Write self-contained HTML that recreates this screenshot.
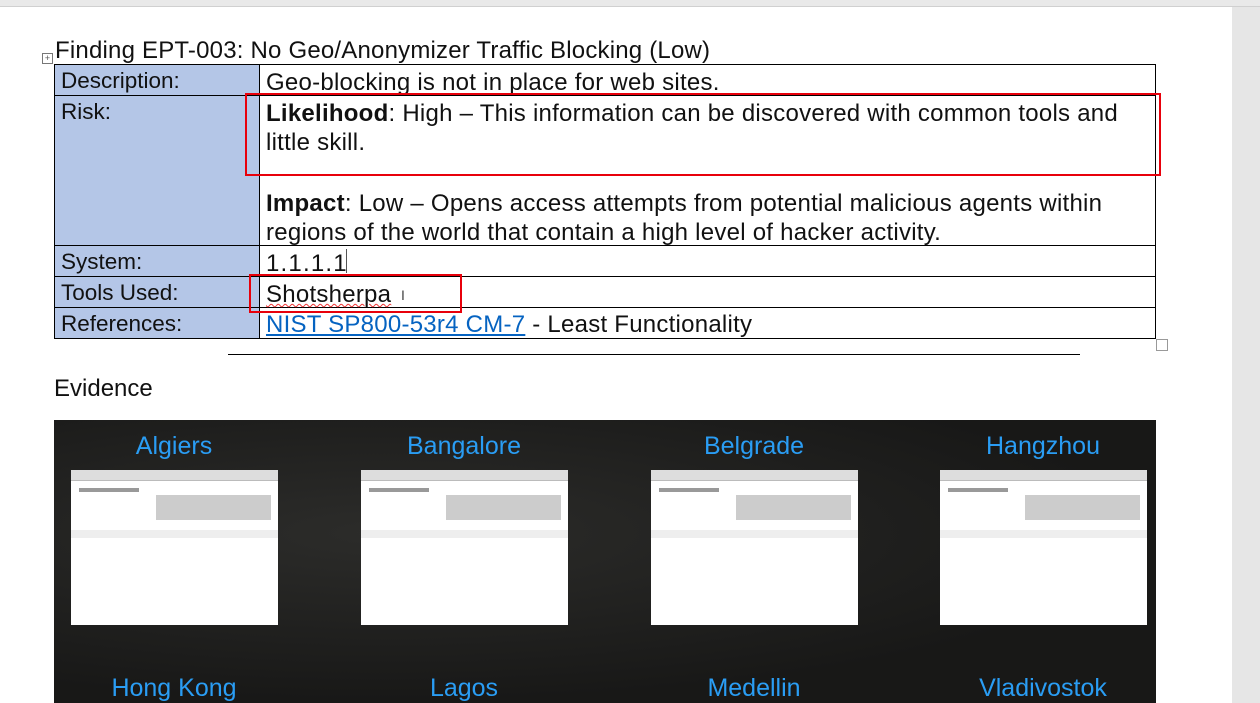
<!DOCTYPE html>
<html><head><meta charset="utf-8"><style>
body{margin:0;width:1260px;height:703px;overflow:hidden;background:#fff;font-family:"Liberation Sans",sans-serif;position:relative}
.a{position:absolute}
.t{font-size:24px;color:#111;white-space:nowrap}
.lab{background:#b4c6e7}
.ln{background:#000}
.cell{font-size:24px;color:#111;position:absolute;white-space:nowrap;letter-spacing:0.25px}
.l{font-size:22.5px;letter-spacing:0}
.thumb{position:absolute;width:207px;height:155px;background:#fff}
.thumb .bar{height:10px;background:#ddd;border-bottom:1px solid #bbb}
.thumb .g{position:absolute;background:#aaa;height:1px}
.city{position:absolute;width:290px;text-align:center;color:#2a9df4;font-size:25px}
</style></head><body>
<div class="a" style="left:0;top:0;width:1260px;height:6px;background:#e9e9e9;border-bottom:1px solid #d0d0d0"></div>
<div class="a" style="left:1232px;top:7px;width:28px;height:696px;background:#e6e6e6"></div>
<div class="a" style="left:42px;top:53px;width:9px;height:9px;border:1px solid #777;font-size:9px;line-height:9px;text-align:center;color:#555">+</div>
<div class="a t" style="left:55px;top:37px;font-size:24px;letter-spacing:0.2px">Finding EPT-003: No Geo/Anonymizer Traffic Blocking (Low)</div>
<div class="a lab" style="left:54px;top:64px;width:205px;height:274px"></div>
<div class="a ln" style="left:54px;top:64px;width:1102px;height:1px"></div>
<div class="a ln" style="left:54px;top:95px;width:1102px;height:1px"></div>
<div class="a ln" style="left:54px;top:245px;width:1102px;height:1px"></div>
<div class="a ln" style="left:54px;top:276px;width:1102px;height:1px"></div>
<div class="a ln" style="left:54px;top:307px;width:1102px;height:1px"></div>
<div class="a ln" style="left:54px;top:338px;width:1102px;height:1px"></div>
<div class="a ln" style="left:54px;top:64px;width:1px;height:275px"></div>
<div class="a ln" style="left:259px;top:64px;width:1px;height:275px"></div>
<div class="a ln" style="left:1155px;top:64px;width:1px;height:275px"></div>
<div class="cell l" style="left:61px;top:68px">Description:</div>
<div class="cell l" style="left:61px;top:99px">Risk:</div>
<div class="cell l" style="left:61px;top:249px">System:</div>
<div class="cell l" style="left:61px;top:280px">Tools Used:</div>
<div class="cell l" style="left:61px;top:311px">References:</div>
<div class="cell" style="left:266px;top:69px">Geo-blocking is not in place for web sites.</div>
<div class="cell" style="left:266px;top:99px;line-height:29px"><b>Likelihood</b>: High – This information can be discovered with common tools and<br>little skill.</div>
<div class="cell" style="left:266px;top:189px;line-height:29px"><b>Impact</b>: Low – Opens access attempts from potential malicious agents within<br>regions of the world that contain a high level of hacker activity.</div>
<div class="cell" style="left:266px;top:250px;letter-spacing:1.2px">1.1.1.1</div>
<div class="a" style="left:346px;top:249px;width:1px;height:24px;background:#555"></div>
<div class="cell" style="left:266px;top:281px;text-decoration:underline wavy #e33;text-decoration-thickness:1px">Shotsherpa</div>
<div class="a" style="left:401px;top:287px;font-size:14px;color:#444">I</div>
<div class="cell" style="left:266px;top:311px"><span style="color:#0563c1;text-decoration:underline">NIST SP800-53r4 CM-7</span> - Least Functionality</div>
<div class="a" style="left:245px;top:93px;width:912px;height:79px;border:2px solid #e8000b"></div>
<div class="a" style="left:249px;top:274px;width:209px;height:35px;border:2px solid #e8000b"></div>
<div class="a" style="left:1156px;top:339px;width:10px;height:10px;border:1px solid #999;background:#fff"></div>
<div class="a ln" style="left:228px;top:354px;width:852px;height:1px"></div>
<div class="a t" style="left:54px;top:375px">Evidence</div>
<div class="a" style="left:54px;top:420px;width:1102px;height:283px;background:radial-gradient(ellipse at 30% 40%,#2c2c2a,#181817 70%)"></div>
<div class="city" style="left:29px;top:432px">Algiers</div>
<div class="city" style="left:319px;top:432px">Bangalore</div>
<div class="city" style="left:609px;top:432px">Belgrade</div>
<div class="city" style="left:898px;top:432px">Hangzhou</div>
<div class="city" style="left:29px;top:674px">Hong Kong</div>
<div class="city" style="left:319px;top:674px">Lagos</div>
<div class="city" style="left:609px;top:674px">Medellin</div>
<div class="city" style="left:898px;top:674px">Vladivostok</div>
<div class="thumb" style="left:71px;top:470px"><div class="bar"></div><div class="g" style="left:8px;top:18px;width:60px;height:4px;background:#999"></div><div class="g" style="left:85px;top:25px;width:115px;height:25px;background:#ccc"></div><div class="a" style="left:0;top:60px;width:207px;height:8px;background:#eee"></div></div>
<div class="thumb" style="left:361px;top:470px"><div class="bar"></div><div class="g" style="left:8px;top:18px;width:60px;height:4px;background:#999"></div><div class="g" style="left:85px;top:25px;width:115px;height:25px;background:#ccc"></div><div class="a" style="left:0;top:60px;width:207px;height:8px;background:#eee"></div></div>
<div class="thumb" style="left:651px;top:470px"><div class="bar"></div><div class="g" style="left:8px;top:18px;width:60px;height:4px;background:#999"></div><div class="g" style="left:85px;top:25px;width:115px;height:25px;background:#ccc"></div><div class="a" style="left:0;top:60px;width:207px;height:8px;background:#eee"></div></div>
<div class="thumb" style="left:940px;top:470px"><div class="bar"></div><div class="g" style="left:8px;top:18px;width:60px;height:4px;background:#999"></div><div class="g" style="left:85px;top:25px;width:115px;height:25px;background:#ccc"></div><div class="a" style="left:0;top:60px;width:207px;height:8px;background:#eee"></div></div>
</body></html>
